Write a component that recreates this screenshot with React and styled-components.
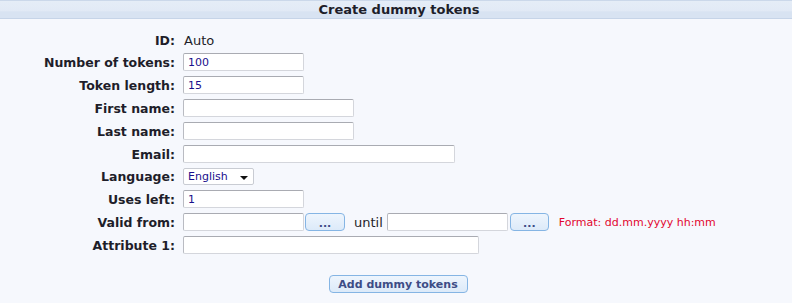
import React from 'react';
import styled, { createGlobalStyle } from 'styled-components';

const GlobalStyle = createGlobalStyle`
  html, body {
    margin: 0;
    padding: 0;
    background: #f6f8fd;
  }
  body {
    font-family: 'DejaVu Sans', Verdana, sans-serif;
    color: #1e1e2a;
  }
`;

const Page = styled.div`
  width: 792px;
  height: 303px;
  background: #f6f8fd;
`;

const Header = styled.div`
  height: 17px;
  line-height: 17px;
  border-top: 1px solid #cbd8ea;
  border-bottom: 1px solid #c6d4e8;
  background: linear-gradient(#e5edf7 0%, #e2eaf6 55%, #d8e3f2 65%, #d8e3f2 100%);
  text-align: center;
  font-weight: bold;
  font-size: 13px;
  color: #1e1e2a;
  padding-left: 6px;
`;

const Form = styled.div`
  display: grid;
  grid-template-columns: 175px 1fr;
  column-gap: 8px;
  row-gap: 5px;
  padding-top: 13px;
  align-items: center;
`;

const Label = styled.div`
  text-align: right;
  font-weight: bold;
  font-size: 12.5px;
  white-space: nowrap;
`;

const Value = styled.div`
  font-size: 13px;
  height: 16px;
  display: flex;
  align-items: center;
  padding-left: 1px;
`;

const Field = styled.div`
  display: flex;
  align-items: center;
`;

const TextInput = styled.input`
  box-sizing: border-box;
  width: ${(p) => p.$w}px;
  height: 18px;
  margin: 0;
  padding: 0 4px;
  border: 1px solid #d4d6dc;
  border-top-color: #a9abb2;
  border-left-color: #b9bbc2;
  border-radius: 2px;
  background: #fff;
  font-family: 'DejaVu Sans', Verdana, sans-serif;
  font-size: 11px;
  color: #1a0f8c;
  outline: none;
`;

const Select = styled.div`
  box-sizing: border-box;
  width: 71px;
  height: 17px;
  border: 1px solid #c9ccd3;
  border-radius: 2px;
  background: #fff;
  display: flex;
  align-items: center;
  justify-content: space-between;
  padding: 0 5px 0 4px;
  font-size: 11px;
  color: #1a0f8c;
`;

const Arrow = styled.span`
  width: 0;
  height: 0;
  margin-top: 3px;
  border-left: 4px solid transparent;
  border-right: 4px solid transparent;
  border-top: 4px solid #111;
`;

const PickButton = styled.button`
  box-sizing: border-box;
  width: ${(p) => p.$w || 40}px;
  height: 18px;
  margin: 0 0 0 ${(p) => p.$ml || 1}px;
  padding: 4px 0 0;
  border: 1px solid #85b5e4;
  border-radius: 4px;
  background: linear-gradient(#eef5fd, #dceaf9);
  font-family: 'DejaVu Sans', Verdana, sans-serif;
  font-size: 11px;
  font-weight: bold;
  color: #3d4c86;
  line-height: 12px;
`;

const Until = styled.span`
  font-size: 13px;
  margin: 0 4px 0 9px;
`;

const Hint = styled.span`
  font-size: 11px;
  color: #e2062f;
  margin-left: 10px;
`;

const Footer = styled.div`
  display: flex;
  justify-content: center;
  padding: 21px 0 0 4px;
`;

const SubmitButton = styled.button`
  box-sizing: border-box;
  width: 139px;
  height: 18px;
  padding: 0;
  border: 1px solid #85b5e4;
  border-radius: 4px;
  background: linear-gradient(#eef5fd, #dceaf9);
  font-family: 'DejaVu Sans', Verdana, sans-serif;
  font-size: 11px;
  font-weight: bold;
  color: #3d4c86;
`;

const fields = [
  { label: 'Number of tokens:', value: '100', w: 121 },
  { label: 'Token length:', value: '15', w: 121 },
  { label: 'First name:', value: '', w: 171 },
  { label: 'Last name:', value: '', w: 171 },
  { label: 'Email:', value: '', w: 272 },
];

export default function App() {
  return (
    <Page>
      <GlobalStyle />
      <Header>Create dummy tokens</Header>
      <Form>
        <Label>ID:</Label>
        <Value>Auto</Value>

        {fields.map((f) => (
          <React.Fragment key={f.label}>
            <Label>{f.label}</Label>
            <Field>
              <TextInput $w={f.w} defaultValue={f.value} />
            </Field>
          </React.Fragment>
        ))}

        <Label>Language:</Label>
        <Field>
          <Select>
            English
            <Arrow />
          </Select>
        </Field>

        <Label>Uses left:</Label>
        <Field>
          <TextInput $w={121} defaultValue="1" />
        </Field>

        <Label>Valid from:</Label>
        <Field>
          <TextInput $w={121} />
          <PickButton>...</PickButton>
          <Until>until</Until>
          <TextInput $w={121} />
          <PickButton $ml={2} $w={39}>...</PickButton>
          <Hint>Format: dd.mm.yyyy hh:mm</Hint>
        </Field>

        <Label>Attribute 1:</Label>
        <Field>
          <TextInput $w={296} />
        </Field>
      </Form>
      <Footer>
        <SubmitButton>Add dummy tokens</SubmitButton>
      </Footer>
    </Page>
  );
}
